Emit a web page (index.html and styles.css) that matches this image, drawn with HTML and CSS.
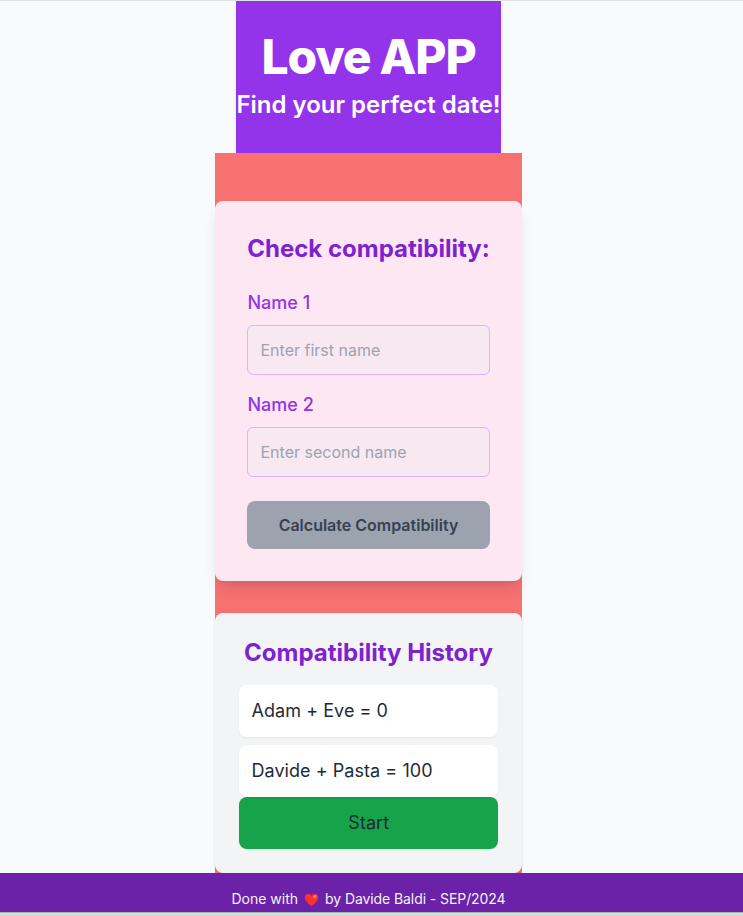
FILE: index.html
```html
<!DOCTYPE html>
<html lang="en">
<head>
<meta charset="utf-8">
<title>Love APP</title>
<link rel="stylesheet" href="styles.css">
</head>
<body>
<div class="app">
  <header class="header">
    <h1 class="title">Love APP</h1>
    <p class="subtitle">Find your perfect date!</p>
  </header>
  <main class="main">
    <form class="card">
      <h2 class="heading">Check compatibility:</h2>
      <div class="field">
        <label class="label" for="n1">Name 1</label>
        <input class="input" id="n1" placeholder="Enter first name">
      </div>
      <div class="field">
        <label class="label" for="n2">Name 2</label>
        <input class="input" id="n2" placeholder="Enter second name">
      </div>
      <button class="calculate" type="button">Calculate Compatibility</button>
    </form>
    <section class="history">
      <h2 class="heading">Compatibility History</h2>
      <ul class="list">
        <li class="item">Adam + Eve = 0</li>
        <li class="item">Davide + Pasta = 100</li>
      </ul>
      <button class="item start" type="button">Start</button>
    </section>
  </main>
  <footer class="footer">
    <span>Done with</span>
    <svg class="heart" viewBox="0 0 16 15"><path fill="#f8312f" d="M8 14.3C5.5 12.5.8 8.6.8 4.900.8 2.500 2.500.9 4.500.9 6 .9 7.300 1.800 8 3.100 8.700 1.800 10 .9 11.500.9c2 0 3.700 1.600 3.700 4 0 3.700-4.700 7.600-7.200 9.400Z"/><ellipse cx="11.600" cy="3.900" rx="2" ry="1.500" fill="#ff8a70" transform="rotate(-35 11.600 3.900)"/></svg>
    <span class="credit">by Davide Baldi - SEP/2024</span>
  </footer>
</div>
<div class="strip"></div>
</body>
</html>
```
FILE: styles.css
```css
* { box-sizing: border-box; margin: 0; padding: 0; }
body {
  height: 916px;
  overflow: hidden;
  background: #f9fafb;
  border-top: 1px solid #e1e2de;
  color: #1f2937;
  font-family: Inter, "Liberation Sans", sans-serif;
  font-size: 16px;
  line-height: 24px;
}
.app { display: flex; flex-direction: column; align-items: center; background: #f9fafc; }
.header, .main { margin-right: 6px; }
.header {
  width: 265px;
  padding: 32px 0;
  background: #9333ea;
  color: #fff;
  text-align: center;
  white-space: nowrap;
  box-shadow: 0 4px 6px -1px rgb(0 0 0 / .1), 0 2px 4px -2px rgb(0 0 0 / .1);
}
.title { margin-bottom: 8px; font-size: 48px; line-height: 48px; font-weight: 800; letter-spacing: -1.2px; }
.subtitle { font-size: 24px; line-height: 32px; font-weight: 600; }
.main {
  display: flex;
  flex-direction: column;
  gap: 32px;
  width: 307px;
  padding-top: 48px;
  background: #f87171;
}
.card {
  padding: 32px;
  border-radius: 8px;
  background: #fce7f3;
  box-shadow: 0 10px 15px -3px rgb(0 0 0 / .1), 0 4px 6px -4px rgb(0 0 0 / .1);
}
.heading { color: #7e22ce; font-size: 24px; line-height: 32px; font-weight: 700; text-align: center; white-space: nowrap; }
.card .heading { margin-bottom: 24px; }
.field { margin-bottom: 16px; }
.label { display: block; margin-bottom: 8px; padding-left: .5px; color: #9333ea; font-size: 18px; line-height: 28px; font-weight: 500; }
.input {
  display: block;
  width: 100%;
  height: 50px;
  padding: 12px 12px 12px 12.5px;
  border: 1px solid #d8b4fe;
  border-radius: 6px;
  background: #f8e8f2;
  font: inherit;
}
.input::placeholder { color: #9ca3af; }
.calculate {
  display: block;
  width: 100%;
  height: 48px;
  margin-top: 24px;
  border: 0;
  border-radius: 8px;
  background: #9ca3af;
  color: #374151;
  font: inherit;
  font-weight: 600;
  white-space: nowrap;
}
.history {
  padding: 24px;
  border-radius: 8px;
  background: #f3f4f6;
  box-shadow: 0 1px 3px rgb(0 0 0 / .1), 0 1px 2px -1px rgb(0 0 0 / .1);
}
.history .heading { margin: 0 -12px 16px; }
.list { display: grid; gap: 8px; list-style: none; }
.item {
  padding: 12px 12px 12px 12.5px;
  border-radius: 8px;
  background: #fff;
  font-size: 18px;
  line-height: 28px;
  letter-spacing: .05px;
  box-shadow: 0 1px 2px rgb(0 0 0 / .05);
}
.start { display: block; width: 100%; border: 0; background: #16a34a; color: #1f2937; font-family: inherit; }
.footer {
  display: flex;
  justify-content: center;
  width: 100%;
  height: 39px;
  padding: 16px 6px 0 0;
  background: #6b21a8;
  color: #f3f4f6;
  font-size: 14px;
  line-height: 20px;
}
.heart { width: 15px; height: 14px; margin: 4px 6px 0; }
.credit { letter-spacing: -.08px; }
.strip { height: 4px; border-top: 1px solid #a9b4ad; background: #cbe2d2; }
```
